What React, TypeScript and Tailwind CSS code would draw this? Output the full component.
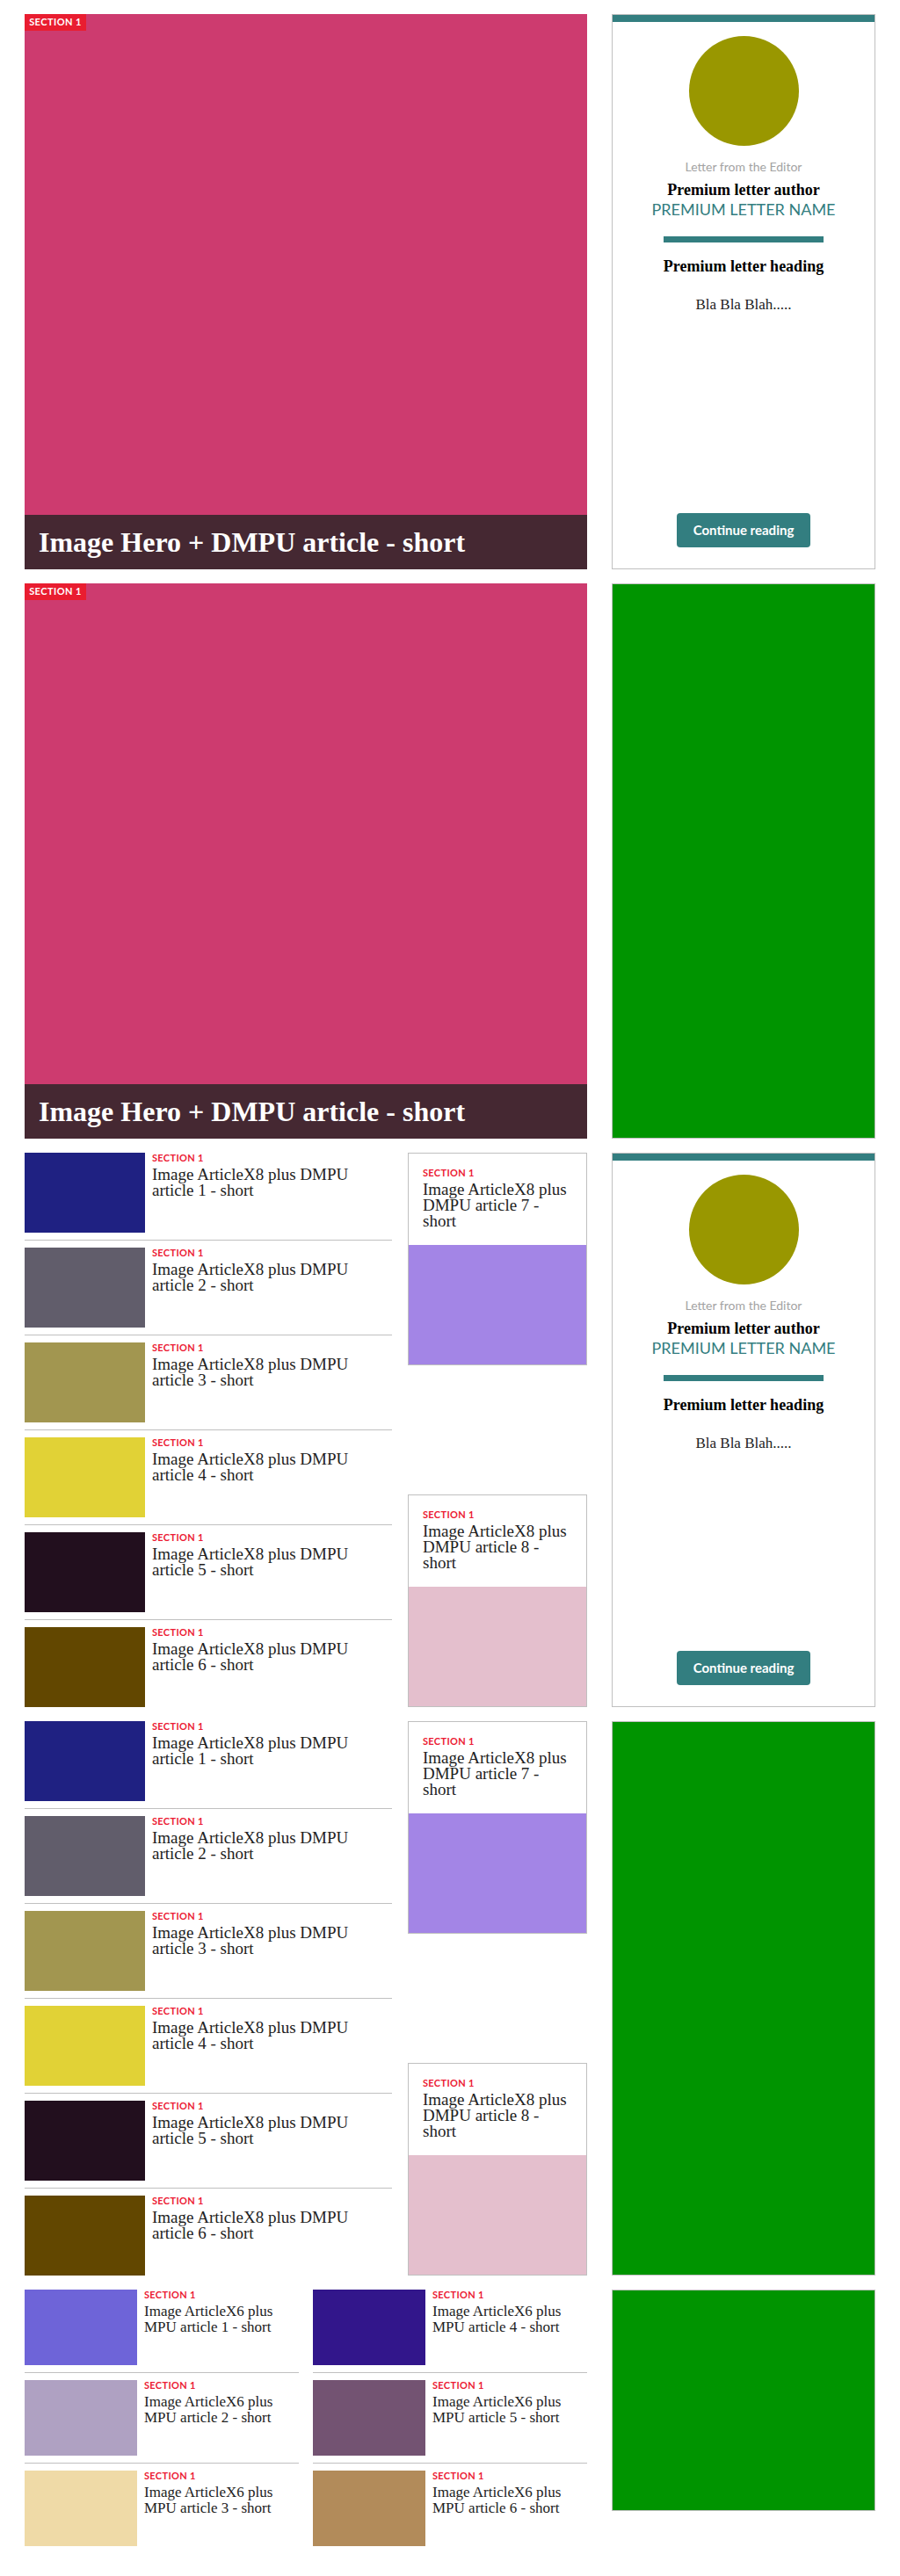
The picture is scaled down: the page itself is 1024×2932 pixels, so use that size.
import React from "react";

// colours of the placeholder images, in page order
const x8Colours = ["#1f2182", "#615d6b", "#a29650", "#e1d236", "#220f1e", "#624700"];
const x6Left = ["#6e64d8", "#afa1c2", "#efdaa7"];
const x6Right = ["#32168b", "#735372", "#b28b5a"];

const Label = () => (
  <div className="font-['Lato',sans-serif] text-[11px] leading-[12px] font-bold tracking-[0.03em] text-[#ec1b34]">
    SECTION 1
  </div>
);

const Hero = () => (
  <div className="relative w-[640px] h-[632px] bg-[#cd3b6f] flex flex-col justify-end">
    <span className="absolute top-0 left-0 w-[70px] h-[19px] bg-[#e91d30] flex items-center justify-center whitespace-nowrap font-['Lato',sans-serif] text-[11px] font-bold tracking-[0.04em] text-white">
      SECTION 1
    </span>
    <div className="h-[62px] bg-[#452832] flex items-center px-4">
      <h2 className="font-['Liberation_Serif',serif] text-[32px] leading-[36px] font-bold text-white">
        Image Hero + DMPU article - short
      </h2>
    </div>
  </div>
);

const LetterCard = () => (
  <div className="w-[300px] border border-[#c0c0c0] flex flex-col items-center text-center">
    <div className="h-2 w-full bg-[#337e80]" />
    <div className="mt-4 w-[125px] h-[125px] rounded-full bg-[#999700]" />
    <p className="mt-4 font-['Lato',sans-serif] text-[14px] leading-4 text-[#a3a3a3]">Letter from the Editor</p>
    <p className="mt-2 font-['Liberation_Serif',serif] text-[18px] leading-5 font-bold text-black">Premium letter author</p>
    <p className="font-['Lato',sans-serif] text-[18px] leading-6 text-[#337e80]">PREMIUM LETTER NAME</p>
    <div className="mt-[19px] h-[7px] w-[182px] bg-[#337e80]" />
    <p className="mt-[17px] font-['Liberation_Serif',serif] text-[18px] leading-5 font-bold text-black">Premium letter heading</p>
    <p className="mt-6 font-['Liberation_Serif',serif] text-[17px] leading-5 text-[#222]">Bla Bla Blah.....</p>
    <button className="mt-auto mb-6 w-[152px] h-[39px] rounded bg-[#337e80] font-['Lato',sans-serif] text-[15px] font-bold text-white">
      Continue reading
    </button>
  </div>
);

const Ad = () => <div className="w-[300px] bg-[#009400] border border-[#c0c0c0]" />;

const ListRow = ({ colour, n }: { colour: string; n: number }) => (
  <div className="flex gap-2 pt-2 pb-2 first:pt-0 last:pb-0 border-b border-[#c0c0c0] last:border-b-0">
    <div className="w-[137px] h-[91px] shrink-0" style={{ backgroundColor: colour }} />
    <div>
      <Label />
      <h3 className="mt-1 font-['Liberation_Serif',serif] text-[19px] leading-[18px] text-[#222]">
        {`Image ArticleX8 plus DMPU article ${n} - short`}
      </h3>
    </div>
  </div>
);

const CardArticle = ({ colour, n }: { colour: string; n: number }) => (
  <div className="border border-[#c0c0c0] flex flex-col">
    <div className="px-4 pt-4 pb-[18px]">
      <Label />
      <h3 className="mt-1 font-['Liberation_Serif',serif] text-[19px] leading-[18px] text-[#222]">
        {`Image ArticleX8 plus DMPU article ${n} - short`}
      </h3>
    </div>
    <div className="h-[136px]" style={{ backgroundColor: colour }} />
  </div>
);

const SmallRow = ({ colour, n }: { colour: string; n: number }) => (
  <div className="flex gap-2 pt-2 pb-2 first:pt-0 last:pb-0 border-b border-[#c0c0c0] last:border-b-0">
    <div className="w-[128px] h-[86px] shrink-0" style={{ backgroundColor: colour }} />
    <div>
      <Label />
      <h3 className="mt-1 font-['Liberation_Serif',serif] text-[17px] leading-[18px] text-[#222]">
        {`Image ArticleX6 plus MPU article ${n} - short`}
      </h3>
    </div>
  </div>
);

const X8Block = ({ side }: { side: React.ReactNode }) => (
  <section className="flex gap-7">
    <div className="w-[640px] flex justify-between">
      <div className="w-[418px] flex flex-col">
        {x8Colours.map((c, i) => (
          <ListRow key={i} colour={c} n={i + 1} />
        ))}
      </div>
      <div className="w-[204px] flex flex-col justify-between">
        <CardArticle colour="#a385e6" n={7} />
        <CardArticle colour="#e4bfcd" n={8} />
      </div>
    </div>
    {side}
  </section>
);

export default function App() {
  return (
    <main className="bg-white px-7 pt-4 pb-[30px] flex flex-col gap-4">
      <section className="flex gap-7">
        <Hero />
        <LetterCard />
      </section>

      <section className="flex gap-7">
        <Hero />
        <Ad />
      </section>

      <X8Block side={<LetterCard />} />
      <X8Block side={<Ad />} />

      <section className="flex gap-7 items-start">
        <div className="w-[640px] grid grid-cols-2 gap-x-4">
          <div className="flex flex-col">
            {x6Left.map((c, i) => (
              <SmallRow key={i} colour={c} n={i + 1} />
            ))}
          </div>
          <div className="flex flex-col">
            {x6Right.map((c, i) => (
              <SmallRow key={i} colour={c} n={i + 4} />
            ))}
          </div>
        </div>
        <div className="w-[300px] h-[252px] bg-[#009400] border border-[#c0c0c0]" />
      </section>
    </main>
  );
}
